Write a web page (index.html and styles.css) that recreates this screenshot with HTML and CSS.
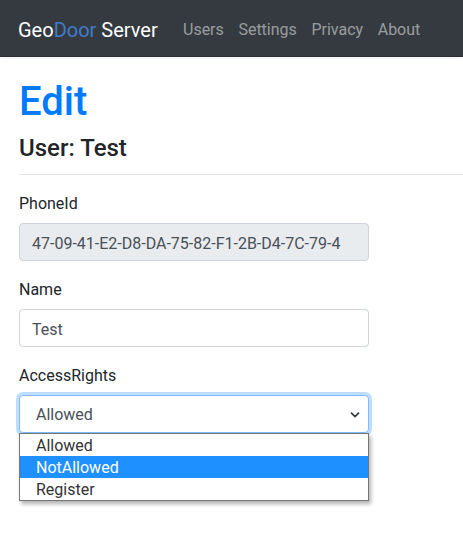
FILE: index.html
```html
<!DOCTYPE html>
<html lang="en">
<head>
<meta charset="utf-8">
<title>Edit - GeoDoor Server</title>
<link rel="stylesheet" href="styles.css">
</head>
<body>
<header>
  <nav class="navbar">
    <a class="brand" href="#">Geo<span class="brand-accent">Door</span> Server</a>
    <ul class="nav">
      <li><a class="nav-link" href="#">Users</a></li>
      <li><a class="nav-link" href="#">Settings</a></li>
      <li><a class="nav-link" href="#">Privacy</a></li>
      <li><a class="nav-link" href="#">About</a></li>
    </ul>
  </nav>
</header>
<div class="container">
  <main class="main">
    <h1 class="title">Edit</h1>
    <h4 class="subtitle">User: Test</h4>
    <hr class="rule">
    <form class="form">
      <div class="form-group">
        <label class="label" for="phoneId">PhoneId</label>
        <input class="control" id="phoneId" type="text" value="47-09-41-E2-D8-DA-75-82-F1-2B-D4-7C-79-4" readonly>
      </div>
      <div class="form-group">
        <label class="label" for="name">Name</label>
        <input class="control" id="name" type="text" value="Test">
      </div>
      <div class="form-group select-group">
        <label class="label" for="rights">AccessRights</label>
        <div class="select focused" id="rights">
          <span class="select-value">Allowed</span>
          <svg class="chevron" width="10" height="8" viewBox="0 0 10 8"><path d="M1.5 2.2 L5 5.6 L8.5 2.2" fill="none" stroke="#343a40" stroke-width="1.8" stroke-linecap="round"/></svg>
        </div>
        <ul class="options">
          <li class="option">Allowed</li>
          <li class="option active">NotAllowed</li>
          <li class="option">Register</li>
        </ul>
      </div>
    </form>
  </main>
</div>
</body>
</html>
```
FILE: styles.css
```css
* { box-sizing: border-box; }
html, body { margin: 0; padding: 0; min-height: 100%; }
html { height: 100%; }
body {
  font-family: Roboto, "Noto Sans", Arial, sans-serif;
  font-size: 16px;
  line-height: 1.5;
  color: #212529;
  background: #fff;
  padding-bottom: 80px;
}
.navbar {
  display: flex;
  align-items: center;
  height: 57px;
  padding: 3px 18px 0;
  background: #343a40;
  border-bottom: 1px solid #2b3035;
  box-shadow: 0 1px 3px rgba(0,0,0,.08);
}
.brand {
  font-size: 20px;
  line-height: 30px;
  color: #fff;
  text-decoration: none;
  margin-right: 18px;
  white-space: nowrap;
}
.brand-accent { color: #3f7ccd; }
.nav {
  display: flex;
  list-style: none;
  margin: 0;
  padding: 0;
}
.nav-link {
  display: block;
  padding: 8px 7.3px;
  color: rgba(255,255,255,.5);
  text-decoration: none;
}
.container {
  padding: 16px 0 0 19px;
}
.title {
  margin: 0 0 8px;
  padding-top: 5px;
  font-size: 40px;
  line-height: 48px;
  font-weight: 500;
  color: #007bff;
}
.subtitle {
  margin: 0;
  font-size: 24px;
  line-height: 29px;
  font-weight: 500;
}
.rule {
  margin: 11px 0 16px;
  border: 0;
  border-top: 1px solid rgba(0,0,0,.1);
}
.form { width: 350px; }
.form-group { margin-bottom: 16px; }
.label {
  display: inline-block;
  padding-top: 1px;
  margin-bottom: 7px;
}
.control {
  display: block;
  width: 100%;
  height: 38px;
  padding: 7px 12px 5px;
  font: inherit;
  color: #495057;
  background: #fff;
  border: 1px solid #ced4da;
  border-radius: 4px;
  outline: none;
}
.control[readonly] { background: #e9ecef; }
.select-group { position: relative; }
.select {
  display: flex;
  align-items: center;
  justify-content: space-between;
  height: 38px;
  padding: 2px 8px 0 16px;
  color: #495057;
  background: #fff;
  border: 1px solid #80bdff;
  border-radius: 4px;
  box-shadow: 0 0 0 3px rgba(0,123,255,.25);
}
.options {
  position: absolute;
  left: 0;
  top: 100%;
  width: 350px;
  margin: 0;
  padding: 0;
  list-style: none;
  background: #fff;
  border: 1px solid #767676;
  box-shadow: 2px 3px 4px rgba(0,0,0,.3);
  z-index: 10;
}
.option {
  height: 22px;
  line-height: 22px;
  padding: 1px 0 0 16px;
  color: #333;
}
.option.active {
  background: #1e90ff;
  color: #fff;
}
```
